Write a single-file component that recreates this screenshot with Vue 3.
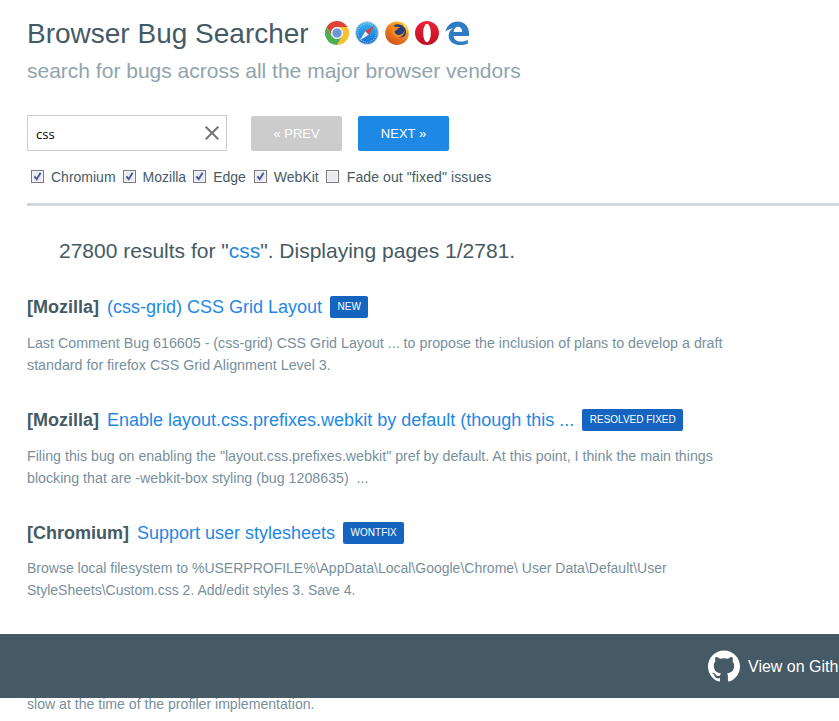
<script setup>
const vendors = ['Chromium', 'Mozilla', 'Edge', 'WebKit']
const results = [
  { vendor: 'Mozilla', title: '(css-grid) CSS Grid Layout', badge: 'NEW', lines: ['Last Comment Bug 616605 - (css-grid) CSS Grid Layout ... to propose the inclusion of plans to develop a draft', 'standard for firefox CSS Grid Alignment Level 3.'] },
  { vendor: 'Mozilla', title: 'Enable layout.css.prefixes.webkit by default (though this ...', badge: 'RESOLVED FIXED', lines: ['Filing this bug on enabling the "layout.css.prefixes.webkit" pref by default. At this point, I think the main things', 'blocking that are -webkit-box styling (bug 1208635)  ...'] },
  { vendor: 'Chromium', title: 'Support user stylesheets', badge: 'WONTFIX', lines: ['Browse local filesystem to %USERPROFILE%\\AppData\\Local\\Google\\Chrome\\ User Data\\Default\\User', 'StyleSheets\\Custom.css 2. Add/edit styles 3. Save 4.'] },
  { vendor: 'Chromium', title: 'CSS profiler', badge: 'WONTFIX', lines: ['The CSS profiler was removed because selector matching was', 'slow at the time of the profiler implementation.'] },
]
</script>

<template>
  <div class="page">
    <header class="head">
      <div class="title-row">
        <h1 class="title">Browser Bug Searcher</h1>
        <div class="logos">
          <svg class="logo" viewBox="0 0 24 24">
            <path fill="#db4437" d="M1.6 6A12 12 0 0 1 22.4 6H12A6 6 0 0 0 6.8 15Z" />
            <path fill="#fbc02d" d="M22.4 6A12 12 0 0 1 12 24L17.2 15A6 6 0 0 0 12 6Z" />
            <path fill="#4caf50" d="M12 24A12 12 0 0 1 1.6 6L6.8 15A6 6 0 0 0 17.2 15Z" />
            <circle cx="12" cy="12" r="5.8" fill="#e4e9ef" />
            <circle cx="12" cy="12" r="4.6" fill="#6a9ad6" />
          </svg>
          <svg class="logo" viewBox="0 0 24 24">
            <defs>
              <linearGradient id="saf" x1="0" y1="0" x2="0" y2="1">
                <stop offset="0" stop-color="#35b4f4" />
                <stop offset="1" stop-color="#1a6fd0" />
              </linearGradient>
            </defs>
            <circle cx="12" cy="12" r="12" fill="#cfd6dc" />
            <circle cx="12" cy="12" r="10.8" fill="url(#saf)" />
            <circle cx="12" cy="12" r="9.2" fill="none" stroke="#d9efff" stroke-width="1.1" stroke-dasharray="0.6 1.6" />
            <path fill="#e53935" d="M19.2 4.8L10.3 10.3L13.7 13.7Z" />
            <path fill="#f4f6f8" d="M4.8 19.2L10.3 10.3L13.7 13.7Z" />
          </svg>
          <svg class="logo" viewBox="0 0 24 24">
            <defs>
              <linearGradient id="ffx" x1="0.85" y1="0" x2="0.2" y2="1">
                <stop offset="0" stop-color="#ffcb2e" />
                <stop offset="0.45" stop-color="#f58220" />
                <stop offset="1" stop-color="#c8501e" />
              </linearGradient>
            </defs>
            <circle cx="12" cy="12.2" r="11.8" fill="url(#ffx)" />
            <path fill="#22407c" d="M8.6 4.2C12 2.6 16.6 3.2 19.2 6.2C21 8.4 21.4 11 20.6 13.4C19.8 15.8 17.8 16.2 15.4 16.2C12 16.2 9 14.2 8.6 11.2C8.4 8.6 8.2 6.4 8.6 4.2Z" />
            <path fill="#f58a1f" d="M9.4 2.4C8.8 4 9.2 5.2 10.2 6C11.8 5.4 14 5.6 15.4 6.8C13.4 6.6 12.2 7.8 11.8 9C11 9.4 10 9.6 9.6 10.6C9.8 13 12.2 14.4 14.6 14C17.2 13.6 18.8 11.8 19.4 9.6C19.6 12.8 17.6 15.6 14.8 16.2C13.8 16.4 12.6 16.4 11.4 16C9.6 15.4 8 14 7 12C6.4 10.4 6.6 6.6 9.4 2.4Z" />
            <path fill="#fdd13a" d="M19 2.6C22.4 5 24.2 9 23.6 13.2C22.9 9.6 21.2 6.8 18.6 5.2Z" />
          </svg>
          <svg class="logo" viewBox="0 0 24 24">
            <defs>
              <linearGradient id="opr" x1="0" y1="0" x2="0" y2="1">
                <stop offset="0" stop-color="#ee2238" />
                <stop offset="1" stop-color="#bd0f22" />
              </linearGradient>
            </defs>
            <path fill="url(#opr)" fill-rule="evenodd" d="M12 0A12 12 0 1 1 12 24A12 12 0 1 1 12 0ZM12 2.8C10 2.8 8.2 6.8 8.2 12C8.2 17.2 10 21.2 12 21.2C14 21.2 15.8 17.2 15.8 12C15.8 6.8 14 2.8 12 2.8Z" />
          </svg>
          <svg class="logo" viewBox="0 0 24 24">
            <path fill="#2f7cc4" fill-rule="evenodd" d="M0.4 10.6C1.8 4.4 6.6 0.4 12.8 0.4C19.6 0.4 24 5.4 24 12.4V15H8.6C8.9 18.7 12 20.6 15.6 20.6C18.4 20.6 20.8 19.9 22.8 18.7V22.7C20.6 23.6 18 24 15.2 24C8.4 24 3.6 20.2 3.6 14.7C3.6 11.6 5.2 9 8.2 7.2C5 7.8 2.4 8.8 0.4 10.6ZM8.6 11H17.2C17.2 7.8 15.4 5.8 12.9 5.8C10.4 5.8 8.9 7.8 8.6 11Z" />
          </svg>
        </div>
      </div>
      <h2 class="subtitle">search for bugs across all the major browser vendors</h2>
    </header>

    <div class="search-row">
      <div class="search">
        <input class="search-input" type="text" value="css" />
        <svg class="clear" viewBox="0 0 14 14">
          <path d="M0.7 0.7L13.3 13.3M13.3 0.7L0.7 13.3" fill="none" stroke="#757575" stroke-width="2" />
        </svg>
      </div>
      <button class="btn btn-off" type="button">« PREV</button>
      <button class="btn btn-on" type="button">NEXT »</button>
    </div>

    <div class="filters">
      <label v-for="v in vendors" :key="v" class="filter">
        <span class="box">
          <svg viewBox="0 0 11 11"><path d="M2.4 5.4L4.7 8.2L8.6 1.8" fill="none" stroke="#47559f" stroke-width="1.8" /></svg>
        </span>
        <span>{{ v }}</span>
      </label>
      <label class="filter">
        <span class="box"></span>
        <span class="fade">Fade out "fixed" issues</span>
      </label>
    </div>

    <hr class="rule" />

    <p class="count">27800 results for "<a class="link">css</a>". Displaying pages 1/2781.</p>

    <article v-for="(r, i) in results" :key="i" class="result">
      <div class="result-head">
        <strong class="vendor">[{{ r.vendor }}]</strong>
        <a class="link result-title">{{ r.title }}</a>
        <span class="badge">{{ r.badge }}</span>
      </div>
      <p class="desc">{{ r.lines[0] }}<br />{{ r.lines[1] }}</p>
    </article>

    <footer class="footer">
      <svg class="gh" viewBox="0 0 24 24">
        <path fill="#fff" d="M12 .297c-6.63 0-12 5.373-12 12 0 5.303 3.438 9.8 8.205 11.385.6.113.82-.258.82-.577 0-.285-.01-1.04-.015-2.04-3.338.724-4.042-1.61-4.042-1.61C4.422 18.07 3.633 17.7 3.633 17.7c-1.087-.744.084-.729.084-.729 1.205.084 1.838 1.236 1.838 1.236 1.07 1.835 2.809 1.305 3.495.998.108-.776.417-1.305.76-1.605-2.665-.3-5.466-1.332-5.466-5.93 0-1.31.465-2.38 1.235-3.22-.135-.303-.54-1.523.105-3.176 0 0 1.005-.322 3.3 1.23.96-.267 1.98-.399 3-.405 1.02.006 2.04.138 3 .405 2.28-1.552 3.285-1.23 3.285-1.23.645 1.653.24 2.873.12 3.176.765.84 1.23 1.91 1.23 3.22 0 4.61-2.805 5.625-5.475 5.92.42.36.81 1.096.81 2.22 0 1.606-.015 2.896-.015 3.286 0 .315.21.69.825.57C20.565 22.092 24 17.592 24 12.297c0-6.627-5.373-12-12-12" />
      </svg>
      <span class="gh-text">View on Github</span>
    </footer>
  </div>
</template>

<style scoped>
.page {
  padding: 16px 0 0 27px;
  font-family: "Liberation Sans", Arial, sans-serif;
  color: #455a64;
  height: 705px;
  overflow: hidden;
}
.title-row {
  display: flex;
  align-items: center;
  height: 36px;
}
.title {
  margin: 0;
  font-size: 28px;
  font-weight: 400;
  line-height: 36px;
  color: #455a64;
}
.logos {
  display: flex;
  gap: 6px;
  margin-left: 16px;
  margin-top: -3px;
}
.logo {
  width: 24px;
  height: 24px;
}
.subtitle {
  margin: 7px 0 0;
  font-size: 21px;
  font-weight: 400;
  line-height: 24px;
  color: #90a4ae;
}
.search-row {
  display: flex;
  align-items: flex-end;
  margin-top: 32px;
}
.search {
  position: relative;
  width: 200px;
  height: 36px;
  margin-right: 24px;
}
.search-input {
  box-sizing: border-box;
  width: 100%;
  height: 100%;
  padding: 2px 30px 0 8px;
  border: 1px solid #ccc;
  border-radius: 0;
  outline: none;
  font-family: "Open Sans", "Liberation Sans", sans-serif;
  font-size: 13px;
  color: #000;
  background: #fff;
}
.clear {
  position: absolute;
  top: 11px;
  right: 8px;
  width: 14px;
  height: 14px;
}
.btn {
  width: 91px;
  height: 35px;
  margin-right: 16px;
  padding: 0;
  border: 0;
  border-radius: 2px;
  font-family: inherit;
  font-size: 13px;
  color: #fff;
}
.btn-off {
  background: #ccc;
}
.btn-on {
  background: #1e88e5;
}
.filters {
  display: flex;
  margin-top: 18px;
  padding-left: 4px;
  font-size: 14px;
  line-height: 17px;
}
.filter {
  display: flex;
  align-items: center;
  margin-right: 7px;
}
.filter:nth-child(3) {
  margin-right: 8px;
}
.box {
  box-sizing: border-box;
  display: block;
  width: 13px;
  height: 13px;
  margin-right: 7px;
  margin-top: -2px;
  border: 1px solid #7a7a7a;
  background: #e9e9ee;
  box-shadow: inset 0 0 0 1px #f6f6f6;
}
.box svg {
  display: block;
  width: 11px;
  height: 11px;
}
.fade {
  margin-left: 1px;
  letter-spacing: 0.1px;
}
.rule {
  height: 3px;
  margin: 17px 0 0;
  border: 0;
  background: #cfd8dc;
}
.count {
  margin: 31px 0 0 32px;
  font-size: 21px;
  line-height: 28px;
  color: #455a64;
}
.link {
  color: #1e88e5;
}
.result {
  height: 113px;
}
.result:first-of-type {
  margin-top: 30px;
}
.result-head {
  display: flex;
  align-items: center;
  height: 24px;
  white-space: nowrap;
}
.vendor {
  font-size: 18px;
  color: #455a64;
}
.result-title {
  margin-left: 8px;
  font-size: 18px;
}
.badge {
  height: 22px;
  margin-left: 8px;
  padding: 0 7.5px;
  border-radius: 2px;
  background: #1565c0;
  color: #fff;
  font-size: 10px;
  line-height: 22px;
}
.desc {
  margin: 13px 0 0;
  width: 730px;
  font-size: 14.1px;
  line-height: 22px;
  color: #78909c;
  white-space: pre-wrap;
}
.result:nth-of-type(1) .desc {
  font-size: 14.27px;
}
.result:nth-of-type(2) .desc {
  font-size: 14.23px;
}
.result:nth-of-type(3) .desc {
  margin-top: 12px;
  font-size: 14px;
}
.footer {
  position: fixed;
  top: 634px;
  left: 0;
  right: 0;
  height: 64px;
  display: flex;
  align-items: center;
  padding-left: 708px;
  overflow: hidden;
  background: #455a64;
  white-space: nowrap;
}
.gh {
  flex: none;
  width: 32px;
  height: 32px;
}
.gh-text {
  margin-left: 8px;
  padding-top: 1px;
  font-size: 16px;
  color: #fff;
}
</style>
